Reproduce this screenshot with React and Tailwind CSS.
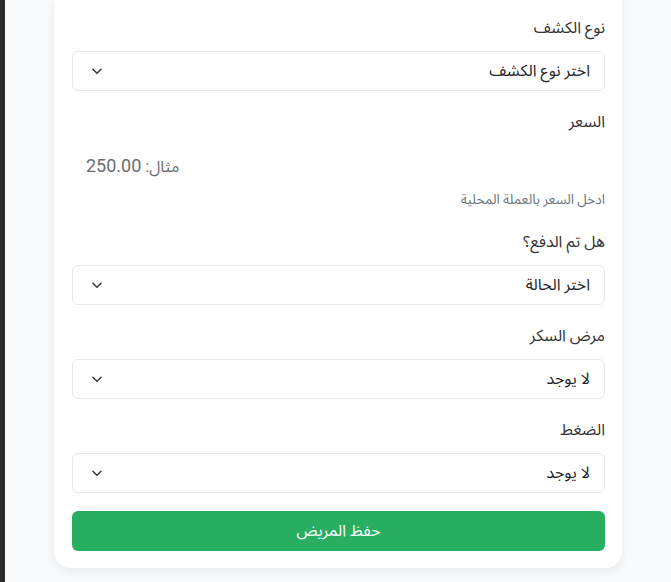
import React from "react";

function Chevron() {
  return (
    <svg width="14" height="14" viewBox="0 0 24 24" fill="none" stroke="#343a40" strokeWidth="2.6" strokeLinecap="round" strokeLinejoin="round">
      <path d="M5 9l7 7 7-7" />
    </svg>
  );
}

function Label({ children, className = "" }) {
  return <div className={"text-[16px] leading-6 text-[#333] " + className}>{children}</div>;
}

function FakeSelect({ value }) {
  return (
    <div className="mt-[11px] flex h-10 items-center justify-between rounded-md border border-[#e6e8eb] bg-white pl-[17px] pr-[14px]">
      <span className="text-[16px] text-[#212529]">{value}</span>
      <Chevron />
    </div>
  );
}

export default function App() {
  return (
    <div className="flex min-h-[582px] w-full bg-[#f8f9fa]" style={{ fontFamily: 'Roboto, "Noto Sans Arabic", "Noto Naskh Arabic", "Noto Sans", "DejaVu Sans", sans-serif' }}>
      <div className="w-[5px] shrink-0 bg-[#2b2b2b]" />
      <div className="flex-1 px-[49px]">
        <div dir="rtl" className="rounded-b-[16px] bg-white pl-[18px] pr-[17px] pt-4 pb-[17px] shadow-[0_3px_10px_rgba(0,0,0,0.07)]">
          <Label>نوع الكشف</Label>
          <FakeSelect value="اختر نوع الكشف" />

          <Label className="mt-[19px]">السعر</Label>
          <div className="mt-[11px] flex h-10 items-center justify-end rounded-md bg-white pl-[14px]">
            <span className="text-[16px] text-[#6a6d70]">مثال: <span className="text-[18px]">250.00</span></span>
          </div>
          <div className="mt-[5px] text-[13.6px] leading-[19px] text-[#6c757d]">ادخل السعر بالعملة المحلية</div>

          <Label className="mt-[21px]">هل تم الدفع؟</Label>
          <FakeSelect value="اختر الحالة" />

          <Label className="mt-[19px]">مرض السكر</Label>
          <FakeSelect value="لا يوجد" />

          <Label className="mt-[19px]">الضغط</Label>
          <FakeSelect value="لا يوجد" />

          <div className="mt-[18px] flex h-10 items-center justify-center rounded-md bg-[#27ae60] text-[16px] text-white">
            حفظ المريض
          </div>
        </div>
        <div className="h-[14px]" />
      </div>
    </div>
  );
}
